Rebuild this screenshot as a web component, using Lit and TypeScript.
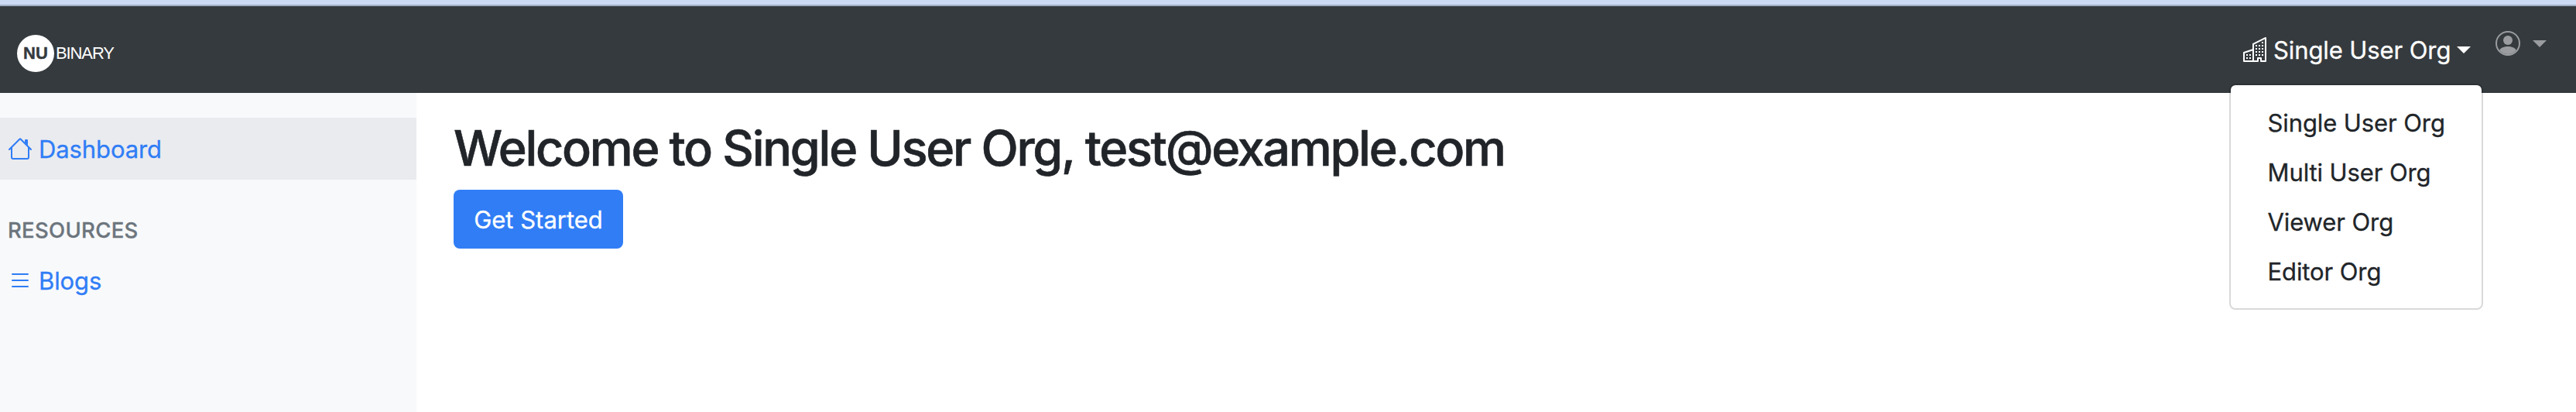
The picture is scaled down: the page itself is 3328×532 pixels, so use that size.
import { LitElement, html, css, svg } from "lit";
import { customElement } from "lit/decorators.js";

const house = svg`<path fill-rule="evenodd" d="M2 13.5V7h1v6.5a.5.5 0 0 0 .5.5h9a.5.5 0 0 0 .5-.5V7h1v6.5a1.5 1.5 0 0 1-1.5 1.5h-9A1.5 1.5 0 0 1 2 13.5zm11-11V6l-2-2V2.5a.5.5 0 0 1 .5-.5h1a.5.5 0 0 1 .5.5z"/><path fill-rule="evenodd" d="M7.293 1.5a1 1 0 0 1 1.414 0l6.647 6.646a.5.5 0 0 1-.708.708L8 2.207 1.354 8.854a.5.5 0 1 1-.708-.708L7.293 1.5z"/>`;
const list = svg`<path fill-rule="evenodd" d="M2.5 11.5A.5.5 0 0 1 3 11h10a.5.5 0 0 1 0 1H3a.5.5 0 0 1-.5-.5zm0-4A.5.5 0 0 1 3 7h10a.5.5 0 0 1 0 1H3a.5.5 0 0 1-.5-.5zm0-4A.5.5 0 0 1 3 3h10a.5.5 0 0 1 0 1H3a.5.5 0 0 1-.5-.5z"/>`;
const building = svg`<path fill-rule="evenodd" d="M14.763.075A.5.5 0 0 1 15 .5v15a.5.5 0 0 1-.5.5h-3a.5.5 0 0 1-.5-.5V14h-1v1.5a.5.5 0 0 1-.5.5h-9a.5.5 0 0 1-.5-.5V10a.5.5 0 0 1 .342-.474L6 7.64V4.5a.5.5 0 0 1 .276-.447l8-4a.5.5 0 0 1 .487.022zM6 8.694L1 10.36V15h5V8.694zM7 15h2v-1.5a.5.5 0 0 1 .5-.5h2a.5.5 0 0 1 .5.5V15h2V1.309l-7 3.5V15z"/><path d="M2 11h1v1H2v-1zm2 0h1v1H4v-1zm-2 2h1v1H2v-1zm2 0h1v1H4v-1zm4-4h1v1H8V9zm2 0h1v1h-1V9zm-2 2h1v1H8v-1zm2 0h1v1h-1v-1zm2-2h1v1h-1V9zm0 2h1v1h-1v-1zM8 7h1v1H8V7zm2 0h1v1h-1V7zm2 0h1v1h-1V7zM8 5h1v1H8V5zm2 0h1v1h-1V5zm2 0h1v1h-1V5zm0-2h1v1h-1V3z"/>`;
const person = svg`<path d="M13.468 12.37C12.758 11.226 11.195 10 8 10s-4.757 1.225-5.468 2.37A6.987 6.987 0 0 0 8 15a6.987 6.987 0 0 0 5.468-2.63z"/><path fill-rule="evenodd" d="M8 9a3 3 0 1 0 0-6 3 3 0 0 0 0 6z"/><path fill-rule="evenodd" d="M8 1a7 7 0 1 0 0 14A7 7 0 0 0 8 1zM0 8a8 8 0 1 1 16 0A8 8 0 0 1 0 8z"/>`;
const icon = (g: unknown) => html`<svg class="icon" viewBox="0 0 16 16">${g}</svg>`;

const orgs = ["Single User Org", "Multi User Org", "Viewer Org", "Editor Org"];

@customElement("app-root")
export class AppRoot extends LitElement {
  static styles = css`
    :host { display: block; height: 532px; overflow: hidden; background: #fff; color: #212529;
      font: 400 31px/48px Inter, sans-serif; letter-spacing: -0.1px; -webkit-text-stroke: 0.3px currentColor; }
    * { box-sizing: border-box; }
    .strip { height: 8px; background: #cddaf4; border-bottom: 2px solid #a0aec2; }
    .nav { height: 112px; background: #353a3e; display: flex; justify-content: space-between; padding: 0 38px 0 22px; }
    .logo { display: flex; align-items: center; height: 48px; margin-top: 37px; color: #fff; }
    .disc { width: 48px; height: 48px; border-radius: 50%; background: #fff; color: #353a3e; display: flex;
      align-items: center; justify-content: center; font: 700 22px/48px "Liberation Sans", sans-serif;
      letter-spacing: 0; -webkit-text-stroke: 0.4px currentColor; }
    .word { font: 400 22px/48px "Liberation Sans", sans-serif; margin-left: 2px; letter-spacing: -1.1px;
      -webkit-text-stroke: 0; }
    .right { display: flex; align-items: flex-start; color: #fff; }
    .org { display: flex; position: relative; height: 48px; margin-top: 33px; }
    .icon { width: 32px; height: 32px; fill: currentColor; stroke: none; display: block; flex: none; }
    .org .icon { margin: 7px 7px 0 0; }
    .org .name { width: 237px; white-space: nowrap; }
    .caret { border: 9px solid transparent; border-top-color: currentColor; border-bottom: 0; height: 0; margin-top: 19px; }
    .user { display: flex; color: #9a9c9f; margin: 32px 0 0 32px; }
    .user .caret { margin: 12px 0 0 16px; }
    .menu { position: absolute; z-index: 2; left: -18px; top: 67px; width: 328px; height: 292px; background: #fff;
      background-clip: padding-box; border: 2px solid rgba(0,0,0,.15); border-radius: 8px; padding: 17px 0 0; color: #212529;
      -webkit-text-stroke: 0.3px #212529; }
    .opt { height: 64px; line-height: 64px; padding-left: 47.5px; white-space: nowrap; }
    .body { display: flex; height: 412px; }
    .side { width: 538px; background: #f8f9fb; padding-top: 32px; }
    .link { display: flex; height: 80px; padding: 16px 10px; color: #307df6; }
    .link .icon { margin: 8px 8px 0 0; }
    .active { background: #eaebef; }
    .active span { margin-top: 1px; }
    .head { font-size: 27.5px; font-weight: 500; line-height: 34px; letter-spacing: 0.3px; color: #6c757d;
      -webkit-text-stroke: 0.3px currentColor; margin: 48px 0 0 10px; }
    .blogs { margin-top: 9px; }
    .main { padding: 33px 0 0 48px; }
    h1 { margin: 0; font-size: 63px; font-weight: 500; line-height: 76px; letter-spacing: -2.31px;
      -webkit-text-stroke: 0.6px currentColor; white-space: nowrap; }
    .btn { display: block; border: 0; width: 219px; height: 76px; margin-top: 16px; border-radius: 8px; background: #307df6;
      color: #fff; font: inherit; padding: 1px 0 0; }
  `;
  render() {
    return html`
      <div class="strip"></div>
      <nav class="nav">
        <div class="logo"><span class="disc">NU</span><span class="word">BINARY</span></div>
        <div class="right">
          <div class="org">${icon(building)}<span class="name">Single User Org</span><span class="caret"></span>
            <div class="menu">${orgs.map((t) => html`<div class="opt">${t}</div>`)}</div>
          </div>
          <div class="user">${icon(person)}<span class="caret"></span></div>
        </div>
      </nav>
      <div class="body">
        <aside class="side">
          <div class="link active">${icon(house)}<span>Dashboard</span></div>
          <div class="head">RESOURCES</div>
          <div class="link blogs">${icon(list)}<span>Blogs</span></div>
        </aside>
        <main class="main">
          <h1>Welcome to Single User Org, test@example.com</h1>
          <button class="btn">Get Started</button>
        </main>
      </div>`;
  }
}
